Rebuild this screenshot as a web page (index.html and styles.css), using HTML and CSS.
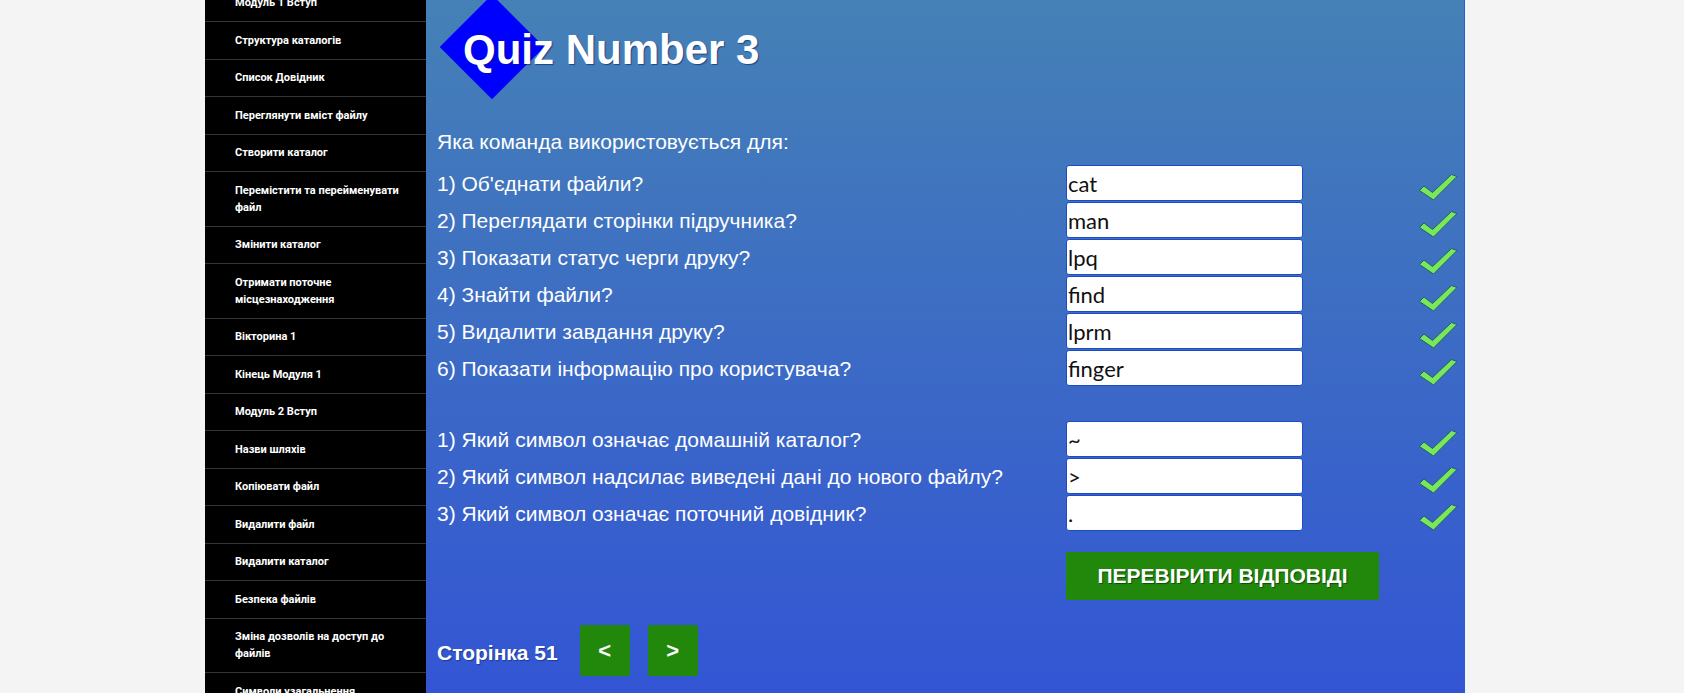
FILE: index.html
```html
<!DOCTYPE html>
<html lang="uk">
<head>
<meta charset="utf-8">
<title>Quiz Number 3</title>
<link rel="stylesheet" href="styles.css">
</head>
<body>
<div class="page">
  <nav class="sidebar">
    <a class="nav-item">Модуль 1 Вступ</a>
    <a class="nav-item">Структура каталогів</a>
    <a class="nav-item">Список Довідник</a>
    <a class="nav-item">Переглянути вміст файлу</a>
    <a class="nav-item">Створити каталог</a>
    <a class="nav-item">Перемістити та перейменувати файл</a>
    <a class="nav-item">Змінити каталог</a>
    <a class="nav-item">Отримати поточне місцезнаходження</a>
    <a class="nav-item">Вікторина 1</a>
    <a class="nav-item">Кінець Модуля 1</a>
    <a class="nav-item">Модуль 2 Вступ</a>
    <a class="nav-item">Назви шляхів</a>
    <a class="nav-item">Копіювати файл</a>
    <a class="nav-item">Видалити файл</a>
    <a class="nav-item">Видалити каталог</a>
    <a class="nav-item">Безпека файлів</a>
    <a class="nav-item">Зміна дозволів на доступ до файлів</a>
    <a class="nav-item">Символи узагальнення</a>
  </nav>
  <main class="main">
    <header class="quiz-header">
      <h1 class="quiz-title">Quiz Number 3</h1>
    </header>
    <p class="intro">Яка команда використовується для:</p>
    <div class="qgroup">
      <div class="qrow"><span class="qtext">1) Об'єднати файли?</span><input class="answer" type="text" value="cat"><svg class="check" viewBox="0 0 40 28"><path d="M1.5 17.5 L6 13 L14.5 19.5 L33.5 1.5 L39 3.5 L15.5 27 Z"/></svg></div>
      <div class="qrow"><span class="qtext">2) Переглядати сторінки підручника?</span><input class="answer" type="text" value="man"><svg class="check" viewBox="0 0 40 28"><path d="M1.5 17.5 L6 13 L14.5 19.5 L33.5 1.5 L39 3.5 L15.5 27 Z"/></svg></div>
      <div class="qrow"><span class="qtext">3) Показати статус черги друку?</span><input class="answer" type="text" value="lpq"><svg class="check" viewBox="0 0 40 28"><path d="M1.5 17.5 L6 13 L14.5 19.5 L33.5 1.5 L39 3.5 L15.5 27 Z"/></svg></div>
      <div class="qrow"><span class="qtext">4) Знайти файли?</span><input class="answer" type="text" value="find"><svg class="check" viewBox="0 0 40 28"><path d="M1.5 17.5 L6 13 L14.5 19.5 L33.5 1.5 L39 3.5 L15.5 27 Z"/></svg></div>
      <div class="qrow"><span class="qtext">5) Видалити завдання друку?</span><input class="answer" type="text" value="lprm"><svg class="check" viewBox="0 0 40 28"><path d="M1.5 17.5 L6 13 L14.5 19.5 L33.5 1.5 L39 3.5 L15.5 27 Z"/></svg></div>
      <div class="qrow"><span class="qtext">6) Показати інформацію про користувача?</span><input class="answer" type="text" value="finger"><svg class="check" viewBox="0 0 40 28"><path d="M1.5 17.5 L6 13 L14.5 19.5 L33.5 1.5 L39 3.5 L15.5 27 Z"/></svg></div>
    </div>
    <div class="qgroup qgroup-second">
      <div class="qrow"><span class="qtext">1) Який символ означає домашній каталог?</span><input class="answer" type="text" value="~"><svg class="check" viewBox="0 0 40 28"><path d="M1.5 17.5 L6 13 L14.5 19.5 L33.5 1.5 L39 3.5 L15.5 27 Z"/></svg></div>
      <div class="qrow"><span class="qtext">2) Який символ надсилає виведені дані до нового файлу?</span><input class="answer" type="text" value="&gt;"><svg class="check" viewBox="0 0 40 28"><path d="M1.5 17.5 L6 13 L14.5 19.5 L33.5 1.5 L39 3.5 L15.5 27 Z"/></svg></div>
      <div class="qrow"><span class="qtext">3) Який символ означає поточний довідник?</span><input class="answer" type="text" value="."><svg class="check" viewBox="0 0 40 28"><path d="M1.5 17.5 L6 13 L14.5 19.5 L33.5 1.5 L39 3.5 L15.5 27 Z"/></svg></div>
    </div>
    <div class="actions">
      <button class="check-btn" type="button">ПЕРЕВІРИТИ ВІДПОВІДІ</button>
    </div>
    <div class="pager">
      <span class="page-num">Сторінка 51</span>
      <button class="pg-btn" type="button">&lt;</button>
      <button class="pg-btn" type="button">&gt;</button>
    </div>
  </main>
</div>
</body>
</html>
```
FILE: styles.css
```css
html, body {
  margin: 0;
  padding: 0;
}
body {
  background: #f4f4f4;
  height: 693px;
  overflow: hidden;
}
.page {
  display: flex;
  margin-left: 205px;
  width: 1260px;
  height: 693px;
  overflow: hidden;
}
.sidebar {
  flex: none;
  width: 221px;
  align-self: flex-start;
  margin-top: -15.5px;
  background: #000;
  display: flex;
  flex-direction: column;
}
.nav-item {
  display: block;
  padding: 9.5px 25px 10px 30px;
  border-bottom: 1px solid #353535;
  color: #fff;
  font-family: Roboto, "Liberation Sans", Arial, sans-serif;
  font-weight: bold;
  font-size: 11px;
  line-height: 17px;
}
.main {
  flex: 1;
  background: linear-gradient(#4581b6, #3355d4);
  border-right: 1px solid #1f5fe0;
  padding: 0 8px 0 11px;
  color: #fff;
  font-family: "Liberation Sans", Arial, sans-serif;
}
.quiz-header {
  position: relative;
  height: 130px;
}
.quiz-header::before {
  content: "";
  position: absolute;
  left: 18px;
  top: 10px;
  width: 74px;
  height: 74px;
  background: #0000ff;
  transform: rotate(45deg);
}
.quiz-title {
  position: relative;
  margin: 0;
  padding: 26px 0 0 26px;
  font-size: 42px;
  line-height: 48px;
  font-weight: bold;
  color: #fff;
  text-shadow: 1px 1px 1px rgba(10, 30, 90, 0.6);
}
.intro {
  margin: 0 0 11px;
  font-size: 21px;
  line-height: 24px;
}
.qgroup {
  display: flex;
  flex-direction: column;
}
.qgroup-second {
  margin-top: 34px;
}
.qrow {
  display: grid;
  grid-template-columns: 629px 237px 1fr 40px;
  height: 37px;
  align-items: center;
}
.qtext {
  font-size: 21px;
  line-height: 24px;
  white-space: nowrap;
}
.answer {
  box-sizing: border-box;
  align-self: start;
  width: 237px;
  height: 36px;
  margin: 0;
  padding: 0 1px;
  border: 1px solid #1b4cc6;
  border-radius: 3px;
  background: #fff;
  color: #111;
  font-family: Lato, "Open Sans", sans-serif;
  font-size: 22px;
}
.check {
  grid-column: 4;
  align-self: start;
  margin-top: 8px;
  margin-left: 2px;
  width: 40px;
  height: 28px;
}
.check path {
  fill: #78e858;
  stroke: #245a78;
  stroke-width: 1;
  stroke-linejoin: round;
}
.actions {
  margin-top: 20px;
  padding-left: 629px;
}
.check-btn {
  width: 313px;
  height: 48px;
  border: none;
  border-radius: 2px;
  background: #22880c;
  color: #fff;
  font-family: "Liberation Sans", Arial, sans-serif;
  font-size: 21px;
  font-weight: bold;
  text-shadow: 1px 1px 1px rgba(0, 40, 0, 0.6);
  padding: 0;
}
.pager {
  display: flex;
  align-items: center;
  margin-top: 25px;
}
.page-num {
  font-size: 21px;
  font-weight: bold;
  line-height: 24px;
  margin-top: 4px;
  text-shadow: 1px 1px 1px rgba(10, 30, 90, 0.5);
}
.pg-btn {
  width: 50px;
  height: 51px;
  margin-left: 18px;
  border: none;
  border-radius: 2px;
  background: #22880c;
  color: #fff;
  font-family: "Liberation Sans", Arial, sans-serif;
  font-size: 22px;
  font-weight: bold;
  padding: 0;
}
.pg-btn:first-of-type {
  margin-left: 22px;
}
```
